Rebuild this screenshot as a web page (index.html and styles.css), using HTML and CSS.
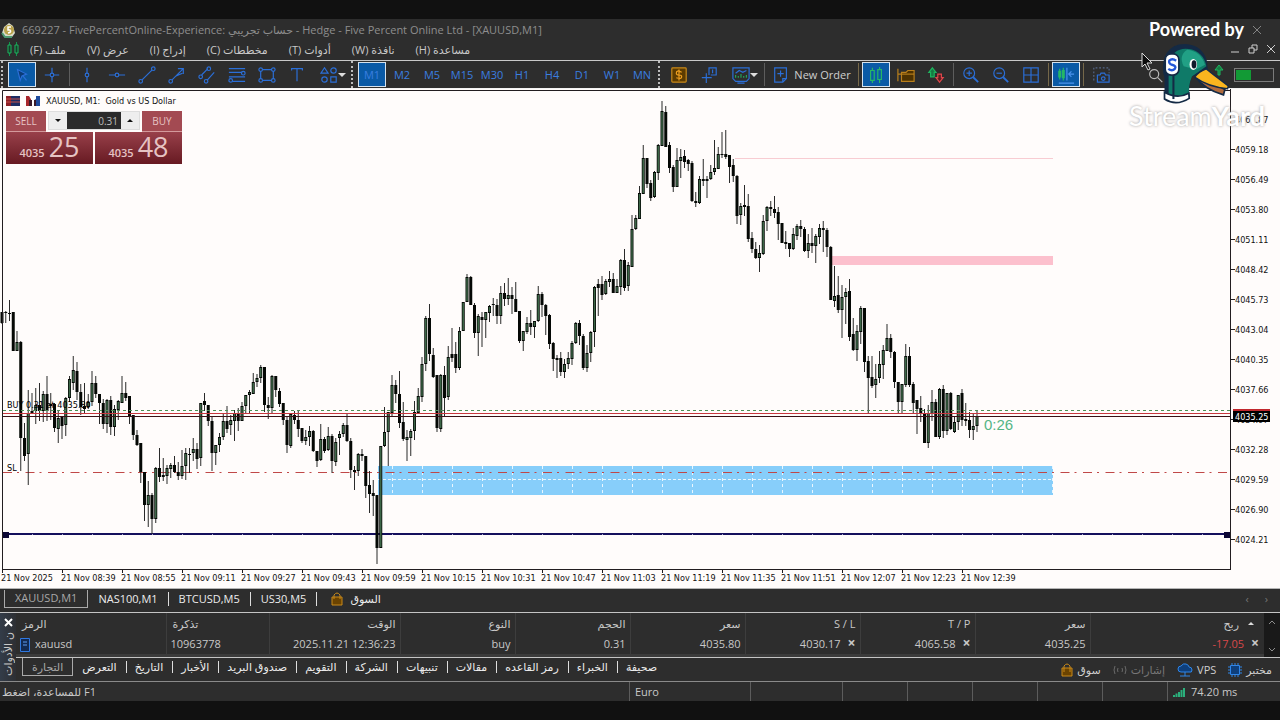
FILE: index.html
```html
<!DOCTYPE html>
<html lang="ar">
<head>
    <meta charset="UTF-8">
    <meta name="viewport" content="width=device-width, initial-scale=1.0">
    <title>XAUUSD,M1</title>
    <link rel="stylesheet" href="styles.css">
</head>
<body>
    <div class="app">
        <!-- Title bar -->
        <header class="titlebar">
            <svg class="logo" width="16" height="16" viewBox="0 0 16 16"><path d="M3 5 8 1l4 3 2 7-3 4H4l-3-4z" fill="#d9dccb"/><circle cx="8" cy="8" r="5" fill="#b9a24a"/><path d="M10 5H7v3h2q2 2-2 3" fill="none" stroke="#fff" stroke-width="1.5"/><path d="M1 11l3 4h7" fill="none" stroke="#4e9a72" stroke-width="2"/></svg>
            <span class="title">669227 - FivePercentOnline-Experience: حساب تجريبي - Hedge - Five Percent Online Ltd - [XAUUSD,M1]</span>
            <button class="win close-app" aria-label="Close"><svg width="10" height="10" viewBox="0 0 10 10"><path d="M1 1l8 8M9 1L1 9"/></svg></button>
        </header>

        <!-- Menu -->
        <nav class="menubar">
            <svg class="candles" width="14" height="16" viewBox="0 0 14 16"><path d="M3.500 1v14M10.500 1v14" stroke="#15944d"/><path d="M2 4h3v8H2zM9 4h3v8H9z" fill="#173f2a" stroke="#1db45e"/></svg>
            <button dir="rtl">ملف (F)</button>
            <button dir="rtl">عرض (V)</button>
            <button dir="rtl">إدراج (I)</button>
            <button dir="rtl">مخططات (C)</button>
            <button dir="rtl">أدوات (T)</button>
            <button dir="rtl">نافذة (W)</button>
            <button dir="rtl">مساعدة (H)</button>
            <div class="win-group">
                <button class="win" aria-label="Minimize"><svg width="10" height="10" viewBox="0 0 10 10"><path d="M1 8h8"/></svg></button>
                <button class="win" aria-label="Restore"><svg width="10" height="10" viewBox="0 0 10 10"><path d="M1 4h5v5H1zM4 4V1h5v5H6"/></svg></button>
                <button class="win" aria-label="Close chart"><svg width="10" height="10" viewBox="0 0 10 10"><path d="M1 1l8 8M9 1L1 9"/></svg></button>
            </div>
        </nav>

        <!-- Toolbar -->
        <div class="toolbar">
            <span class="grip"></span>
            <button class="tool active" aria-label="Cursor"><svg viewBox="0 0 20 20"><path d="M5 4l3 12 2-5 5-2z" fill="#0b3c78"/><path d="M11 11l4 5"/></svg></button>
            <button class="tool" aria-label="Crosshair"><svg viewBox="0 0 20 20"><path d="M10 2v6M10 12v6M2 10h6M12 10h6"/><circle cx="10" cy="10" r="2"/></svg></button>
            <span class="sep"></span>
            <button class="tool" aria-label="Vertical line"><svg viewBox="0 0 20 20"><path d="M10 2v6M10 12v6"/><circle cx="10" cy="10" r="2"/></svg></button>
            <button class="tool" aria-label="Horizontal line"><svg viewBox="0 0 20 20"><path d="M1 10h7M12 10h7"/><circle cx="10" cy="10" r="2"/></svg></button>
            <button class="tool" aria-label="Trend line"><svg viewBox="0 0 20 20"><path d="M4.500 15.500l11-11"/><circle cx="3" cy="17" r="2"/><circle cx="17" cy="3" r="2"/></svg></button>
            <button class="tool" aria-label="Arrow line"><svg viewBox="0 0 20 20"><path d="M4.500 15.500L17 3M11 3h6v6M9 11l7-3"/><circle cx="3" cy="17" r="2"/></svg></button>
            <button class="tool" aria-label="Channel"><svg viewBox="0 0 20 20"><path d="M4 10l7-7M10 16l8-9"/><circle cx="3" cy="12" r="2"/><circle cx="12" cy="3" r="2"/><circle cx="9" cy="17" r="2"/></svg></button>
            <button class="tool" aria-label="Fibonacci"><svg viewBox="0 0 20 20"><path d="M1 3h18M1 7h18M1 12h18M1 17h18"/><circle cx="17" cy="8" r="2" fill="#2d2d2d"/><circle cx="3" cy="16" r="2" fill="#2d2d2d"/></svg></button>
            <button class="tool" aria-label="Rectangle"><svg viewBox="0 0 20 20"><path d="M3 4h14v12H3z"/><g fill="#2d2d2d"><circle cx="3" cy="4" r="2"/><circle cx="17" cy="4" r="2"/><circle cx="3" cy="16" r="2"/><circle cx="17" cy="16" r="2"/></g></svg></button>
            <button class="tool" aria-label="Text"><svg viewBox="0 0 20 20"><path d="M4 5V3h12v2M10 3v14"/></svg></button>
            <button class="tool drop" aria-label="Objects"><svg viewBox="0 0 20 20"><path d="M5 2l4 6H1zM12 12h6v6h-6z"/><circle cx="15" cy="5" r="3"/><circle cx="5" cy="15" r="3"/></svg><i class="caret"></i></button>
            <span class="grip"></span>
            <button class="tool active">M1</button>
            <button class="tool">M2</button>
            <button class="tool">M5</button>
            <button class="tool">M15</button>
            <button class="tool">M30</button>
            <button class="tool">H1</button>
            <button class="tool">H4</button>
            <button class="tool">D1</button>
            <button class="tool">W1</button>
            <button class="tool">MN</button>
            <span class="grip"></span>
            <button class="tool" aria-label="Market"><svg viewBox="0 0 20 20"><rect x="2" y="2" width="16" height="16" rx="1" fill="#5c3b00" stroke="#c98a1a"/><path d="M13 7q-6-3-6 1 0 2 3 2t3 2q0 3-6 1M10 4v12" stroke="#f0a020"/></svg></button>
            <button class="tool" aria-label="Data window"><svg viewBox="0 0 20 20"><path d="M7 8v11M2 13h11M10 10V2h8v8h-6"/><path d="M14 4v4"/></svg></button>
            <button class="tool drop" aria-label="Indicators"><svg viewBox="0 0 20 20"><path d="M1 2h18v12l-3 3H4l-3-3zM6 19h8"/><path d="M4 8l4-3 4 2 4-2" /><path d="M4 13v-3M7 13v-2M10 13v-4M13 13v-2M16 13v-3" stroke="#22a55a"/></svg><i class="caret"></i></button>
            <span class="sep"></span>
            <button class="tool order"><svg viewBox="0 0 20 20"><path d="M3 2h13v12l-4 4H3zM16 14h-4v4M9.500 5v7M6 8.500h7"/></svg>New Order</button>
            <span class="sep amber"></span>
            <button class="tool active" aria-label="Candles"><svg viewBox="0 0 20 20" class="green"><path d="M6 2v3M6 16v3M14 1v3M14 15v4M4 5h4v11H4zM12 4h4v11h-4z"/></svg></button>
            <button class="tool" aria-label="Templates"><svg viewBox="0 0 20 20"><path d="M1 3v14M1 9h4" stroke="#b97f1b"/><path d="M5 7h5l2-2h7v12H5z" fill="#4e3200" stroke="#b97f1b"/><path d="M5 9h14" stroke="#b97f1b"/></svg></button>
            <button class="tool" aria-label="Depth"><svg viewBox="0 0 20 20"><path d="M6 2l4 5H8v5H4V7H2z" fill="#157a42" stroke="#1db45e"/><path d="M14 18l4-5h-2V9h-4v4h-2z" fill="#5b1d20" stroke="#e0474c"/></svg></button>
            <span class="sep"></span>
            <button class="tool" aria-label="Zoom in"><svg viewBox="0 0 20 20"><circle cx="8" cy="8" r="6"/><path d="M12.500 12.500L18 18" stroke-width="2"/><path d="M8 5v6M5 8h6"/></svg></button>
            <button class="tool" aria-label="Zoom out"><svg viewBox="0 0 20 20"><circle cx="8" cy="8" r="6"/><path d="M12.500 12.500L18 18" stroke-width="2"/><path d="M5 8h6"/></svg></button>
            <button class="tool" aria-label="Tile windows"><svg viewBox="0 0 20 20"><path d="M2 2h16v16H2zM10 2v16M2 10h16"/></svg></button>
            <span class="sep amber"></span>
            <button class="tool active" aria-label="Chart shift"><svg viewBox="0 0 20 20"><path d="M3 3v12M7 2v14M2 6h2v6H2zM6 5h2v8H6z" stroke="#25b866"/><path d="M11 2v14M19 9h-5M16 6l-3 3 3 3M2 19h17" stroke="#4b94ee"/></svg></button>
            <span class="sep amber"></span>
            <button class="tool" aria-label="Screenshot"><svg viewBox="0 0 20 20"><path d="M2 16V2h17v6" stroke="#56688a" stroke-dasharray="2 2"/><path d="M6 10h3l1-2h4l1 2h4v8H6z"/><circle cx="12.500" cy="14" r="2"/></svg></button>
            <div class="tool-right">
                <button class="tool" aria-label="Search"><svg viewBox="0 0 20 20" class="grey"><circle cx="8" cy="9" r="5"/><path d="M12 13l5 5"/></svg></button>
                <svg class="up" width="10" height="16" viewBox="0 0 10 16"><path d="M5 1l4 5H6v5H4V6H1z" fill="#157a42" stroke="#1db45e"/></svg>
                <span class="battery"><i></i></span>
            </div>
        </div>

        <!-- Chart -->
        <main class="chart">
            <svg class="plot" id="plot" width="100%" height="484">
                <g transform="translate(0 -89)">
                    <rect x="735" y="158" width="318" height="1" fill="#f8ccd2"/>
                    <rect x="832" y="256" width="221" height="9" fill="#fcc0cd"/>
                    <rect x="378" y="466" width="675" height="29" fill="#87cefa"/>
                    <path d="M378 479.500h675" stroke="#e9f6fe" stroke-dasharray="3 2"/>
                    <g id="grid" stroke="#e9f6fe" stroke-dasharray="3 3"></g>
                    <line x1="3" x2="99.800%" y1="472.500" y2="472.500" stroke="#c04848" stroke-dasharray="9 5 2 6.500"/>
                    <rect x="3" y="533" width="100%" height="2" fill="#140f5c"/>
                    <g id="marks" fill="#aaa6cd"></g>
                    <g id="candles"></g>
                    <line x1="3" x2="100%" y1="410.500" y2="410.500" stroke="#4f8f55" stroke-dasharray="3 3"/>
                    <line x1="3" x2="100%" y1="413.500" y2="413.500" stroke="#c8383e"/>
                    <line x1="3" x2="100%" y1="416.500" y2="416.500" stroke="#3a1014"/>
                    <path d="M2.500 570V90.500H4000" fill="none" stroke="#221d20"/>
                    <path d="M2 569.500H4000" stroke="#221d20"/>
                    <rect x="3" y="532" width="6" height="6" fill="#0b0634"/>
                    <g id="ticks" fill="#221d20"></g>
                    <g class="chart-text">
                        <text x="7" y="408">BUY 0.31 at 4035.80</text>
                        <text x="7" y="471">SL</text>
                    </g>
                    <text class="timer" x="984" y="430">0:26</text>
                </g>
            </svg>
            <div class="prices">
                <span>4061.87</span><span>4059.18</span><span>4056.49</span><span>4053.80</span><span>4051.11</span>
                <span>4048.42</span><span>4045.73</span><span>4043.04</span><span>4040.35</span><span>4037.66</span>
                <span>4034.97</span><span>4032.28</span><span>4029.59</span><span>4026.90</span><span>4024.21</span>
                <b class="tag">4035.25</b>
                <i class="handle"></i>
            </div>
            <div class="times">
                <span>21 Nov 2025</span><span>21 Nov 08:39</span><span>21 Nov 08:55</span><span>21 Nov 09:11</span><span>21 Nov 09:27</span>
                <span>21 Nov 09:43</span><span>21 Nov 09:59</span><span>21 Nov 10:15</span><span>21 Nov 10:31</span><span>21 Nov 10:47</span>
                <span>21 Nov 11:03</span><span>21 Nov 11:19</span><span>21 Nov 11:35</span><span>21 Nov 11:51</span><span>21 Nov 12:07</span>
                <span>21 Nov 12:23</span><span>21 Nov 12:39</span>
            </div>

            <!-- One click trading -->
            <div class="quick">
                <div class="symbol">
                    <svg width="14" height="10" viewBox="0 0 14 10"><path d="M0 0h14v10H0z" fill="#1e2c63"/><path d="M0 0h5v10H0z" fill="#8c1f26"/><path d="M0 3h14M0 6h14" stroke="#c4504b"/></svg>
                    <svg width="14" height="10" viewBox="0 0 14 10"><path d="M0 0h5v10H0z" fill="#a8262c"/><path d="M8 0h6v10H8z" fill="#1f4a9c"/><path d="M3 0h7v3L7 5v5H6V5z" fill="#fff"/><path d="M3 4h3v6H3zM8 4h2v6H8z" fill="#3a1a2a"/></svg>
                    <span>XAUUSD, M1:&nbsp; Gold vs US Dollar</span>
                </div>
                <div class="trade">
                    <button class="side">SELL</button>
                    <div class="lot">
                        <button aria-label="Less"><i class="caret"></i></button>
                        <input type="text" value="0.31" aria-label="Volume">
                        <button aria-label="More"><i class="caret upward"></i></button>
                    </div>
                    <button class="side">BUY</button>
                    <button class="quote"><small>4035</small>25</button>
                    <button class="quote"><small>4035</small>48</button>
                </div>
            </div>
        </main>

        <!-- Chart tabs -->
        <nav class="chart-tabs">
            <button class="current">XAUUSD,M1</button>
            <button>NAS100,M1</button>
            <button>BTCUSD,M5</button>
            <button>US30,M5</button>
            <button class="market"><svg width="12" height="14" viewBox="0 0 12 14"><path d="M1 5h10v8H1z" fill="#6b4300" stroke="#c98a1a"/><path d="M3 7V3q3-4 6 0v4" fill="none" stroke="#c98a1a"/></svg>السوق</button>
            <span class="scroll-tabs">‹<b></b>›</span>
        </nav>

        <!-- Toolbox -->
        <section class="toolbox">
            <aside class="strip">
                <button aria-label="Close toolbox"><svg width="9" height="9" viewBox="0 0 9 9"><path d="M1 1l7 7M8 1L1 8" stroke="#fff" stroke-width="2"/></svg></button>
                <span>ن الأدوات</span>
            </aside>
            <div class="panel">
                <div class="positions">
                    <table>
                        <colgroup><col class="c-symbol"><col class="c-ticket"><col class="c-time"><col class="c-num"><col class="c-num"><col class="c-num"><col class="c-num"><col class="c-num"><col class="c-num"><col></colgroup>
                        <tr><th class="left">الرمز</th><th class="left">تذكرة</th><th>الوقت</th><th>النوع</th><th>الحجم</th><th>سعر</th><th>S / L</th><th>T / P</th><th>سعر</th><th class="profit">ربح<i class="caret upward"></i></th></tr>
                        <tr><td class="left"><svg width="10" height="14" viewBox="0 0 10 14"><path d="M.500.500h9v13h-9z" fill="#122a52" stroke="#2f78e0"/><path d="M3 4h4M3 7h4" stroke="#5d9df5"/></svg>xauusd</td><td class="left">10963778</td><td>2025.11.21 12:36:23</td><td>buy</td><td>0.31</td><td>4035.80</td><td>4030.17<button class="x" aria-label="Remove S/L">×</button></td><td>4065.58<button class="x" aria-label="Remove T/P">×</button></td><td>4035.25</td><td class="profit"><span class="loss">-17.05</span><button class="x" aria-label="Close position">×</button></td></tr>
                    </table>
                    <div class="vscroll"><svg width="8" height="5" viewBox="0 0 8 5"><path d="M1 4l3-3 3 3"/></svg><svg width="8" height="5" viewBox="0 0 8 5"><path d="M1 1l3 3 3-3"/></svg></div>
                </div>
                <nav class="box-tabs">
                    <button class="current">التجارة</button>
                    <button>التعرض</button>
                    <button>التاريخ</button>
                    <button>الأخبار</button>
                    <button>صندوق البريد</button>
                    <button>التقويم</button>
                    <button>الشركة</button>
                    <button>تنبيهات</button>
                    <button>مقالات</button>
                    <button>رمز القاعده</button>
                    <button>الخبراء</button>
                    <button>صحيفة</button>
                    <div class="services">
                        <a href="#"><svg width="12" height="14" viewBox="0 0 12 14"><path d="M1 5h10v8H1z" fill="#6b4300" stroke="#c98a1a"/><path d="M3 9V3q3-4 6 0v6" fill="none" stroke="#c98a1a"/></svg>سوق</a>
                        <a href="#" class="dim"><svg width="14" height="10" viewBox="0 0 14 10" fill="none" stroke="#6a6a6a"><path d="M2 1q-2 4 0 8M5 3q-1 2 0 4M12 1q2 4 0 8M9 3q1 2 0 4"/></svg>إشارات</a>
                        <a href="#"><svg width="16" height="14" viewBox="0 0 16 14"><path d="M4 9q-3 0-3-3t3-3q2-3 5-2t3 3q3 0 3 3t-3 2z" fill="#0e3f7c" stroke="#2f86e8"/><path d="M8 9v4M3 13h10" stroke="#2f86e8"/></svg>VPS</a>
                        <a href="#"><svg width="14" height="14" viewBox="0 0 14 14"><path d="M4 0v14M7 0v14M10 0v14M0 4h14M0 7h14M0 10h14" stroke="#2f86e8"/><path d="M2.500 2.500h9v9h-9z" fill="#0e3f7c" stroke="#2f86e8"/></svg>مختبر</a>
                    </div>
                </nav>
            </div>
        </section>

        <!-- Status bar -->
        <footer class="status">
            <span class="help">للمساعدة، اضغط F1</span>
            <span class="w120">Euro</span><span class="w92"></span><span></span><span></span><span></span><span></span><span></span>
            <span class="ping"><svg width="13" height="10" viewBox="0 0 13 10"><path d="M1 10V8M3.500 10V6.500M6 10V5M8.500 10V3M11 10V1" stroke="#2bb07c" stroke-width="2"/></svg>74.20 ms</span>
        </footer>

        <!-- Stream watermark -->
        <div class="powered">Powered by</div>
        <svg class="duck" width="72" height="64" viewBox="1215 75 210 186">
            <path d="M1234 182q-12-38 6-72 20-30 62-26 44 6 56 50l2 24-48 22q-10 30-4 58-30 24-74 2z" fill="#142a45"/>
            <path d="M1246 240V170l18-62q18-14 42-10 42 8 50 50l-42 30q-12 26-8 58-30 18-60 4z" fill="#0f7a68"/>
            <path d="M1300 100q40 4 52 44l-26 14-36-10q-16-30 10-48z" fill="#21a085"/>
            <path d="M1234 224v20q34 22 72-2l-1-15q-34 18-71-3z" fill="#fff" stroke="#142a45" stroke-width="5"/>
            <path d="M1260 172v72" stroke="#142a45" stroke-width="6"/>
            <path d="M1324 178q24 36 82 54l4-16-56-30z" fill="#b06a3c" stroke="#142a45" stroke-width="5"/>
            <path d="M1322 180q12-16 34-24l20 16 44 34-2 8q-58-6-96-34z" fill="#f9b51e" stroke="#142a45" stroke-width="4"/>
            <ellipse cx="1318" cy="143" rx="11" ry="16" fill="#fff"/><ellipse cx="1320" cy="143" rx="7" ry="12" fill="#10192b"/>
            <rect x="1236" y="112" width="40" height="62" rx="17" fill="#fff" stroke="#142a45" stroke-width="5"/>
            <path d="M1268 132q-12-8-20 0-3 8 8 12 14 4 8 12-8 8-19 0" fill="none" stroke="#2458d8" stroke-width="7"/>
        </svg>
        <div class="brand">Stream<b>Yard</b></div>
        <svg class="pointer" width="12" height="19" viewBox="0 0 12 19"><path d="M1 1v14l3-3 3 6 2-1-3-6h5z" fill="#0c0c0c" stroke="#ddd"/></svg>
    </div>
    <script src="script.js"></script>
</body>
</html>
```
FILE: styles.css
```css
* {
    box-sizing: border-box;
}
body {
    margin: 0;
    background-color: #111;
    color: #c8c8c8;
    font-family: "Open Sans", "DejaVu Sans", sans-serif;
    font-size: 11px;
}
button, input {
    font: inherit;
    color: inherit;
    background: none;
    border: none;
    padding: 0;
    margin: 0;
}
.app {
    position: relative;
    margin: 19px 0;
    background-color: #2d2d2d;
    overflow: hidden;
}
.app svg {
    flex: none;
}

/* Title and menu */
.titlebar {
    display: flex;
    align-items: center;
    height: 21px;
    padding: 0 18px 0 1px;
    color: #8e8e8e;
}
.title {
    margin-left: 5px;
    white-space: nowrap;
}
.win {
    display: flex;
    align-items: center;
}
.win svg {
    fill: none;
    stroke: #d0d0d0;
}
.close-app {
    margin-left: auto;
}
.close-app svg {
    stroke: #858585;
}
.menubar {
    display: flex;
    align-items: center;
    gap: 21px;
    height: 20px;
    padding: 0 4px 2px 6px;
    white-space: nowrap;
}
.candles {
    margin-right: -11px;
}
.win-group {
    display: flex;
    gap: 8px;
    margin-left: auto;
}

/* Toolbar */
.toolbar {
    display: flex;
    align-items: center;
    gap: 2px;
    height: 29px;
    padding: 0 6px 0 1px;
    border-top: 1px solid #c9c9c9;
    border-bottom: 1px solid #f2f2f2;
}
.tool {
    display: flex;
    align-items: center;
    justify-content: center;
    flex: none;
    width: 28px;
    height: 25px;
    color: #3a7ee0;
}
.tool svg {
    width: 18px;
    height: 18px;
    fill: none;
    stroke: #2b6fd8;
    stroke-width: 1.3;
}
.tool svg.green {
    stroke: #25b866;
}
.tool svg.grey {
    stroke: #bbb;
}
.tool.active {
    background-color: #0a5aa6;
    border: 1px solid #d5e2ee;
}
.tool.drop {
    width: 36px;
    padding-left: 4px;
}
.tool.order {
    width: 87px;
    gap: 4px;
    color: #cfcfcf;
}
.caret {
    display: inline-block;
    flex: none;
    border: 4px solid transparent;
    border-top-color: #ddd;
    border-bottom: none;
}
.caret.upward {
    border-top: none;
    border-bottom: 4px solid #ddd;
}
.grip {
    flex: none;
    width: 3px;
    height: 27px;
    margin-right: 2px;
    border-left: 2px dotted #bdbdbd;
}
.sep {
    flex: none;
    width: 1px;
    height: 23px;
    margin: 0 1px;
    background-color: #5d5d5d;
}
.sep.amber {
    background-color: #75684a;
}
.tool-right {
    display: flex;
    align-items: center;
    margin-left: auto;
}
.up {
    margin: 0 10px 6px 44px;
}
.battery {
    width: 40px;
    height: 14px;
    padding: 1px;
    border: 1px solid #7b7b7b;
}
.battery i {
    display: block;
    width: 15px;
    height: 10px;
    background-color: #129a35;
}

/* Chart */
.chart {
    position: relative;
    display: grid;
    grid-template-columns: 1fr 50px;
    background-color: #fffcfb;
    color: #111;
    font-family: "DejaVu Sans Condensed", "DejaVu Sans", sans-serif;
    font-size: 9px;
    border-bottom: 1px solid #b5b5b5;
}
.plot {
    display: block;
}
.chart-text {
    font-size: 9px;
}
.timer {
    font-family: "Liberation Sans", sans-serif;
    font-size: 15px;
    fill: #54b585;
}
.prices {
    position: relative;
    display: flex;
    flex-direction: column;
    height: 481px;
    padding-top: 16px;
    border-left: 1px solid #221d20;
}
.prices span {
    height: 30px;
    line-height: 30px;
}
.prices span::before {
    content: "";
    display: inline-block;
    width: 4px;
    height: 1px;
    margin-bottom: 3px;
    background-color: #221d20;
}
.tag {
    position: absolute;
    left: 2px;
    top: 320px;
    padding: 0 2px;
    height: 13px;
    line-height: 12px;
    border-top: 2px solid #c1272d;
    background-color: #000;
    color: #fff;
    font-weight: normal;
}
.handle {
    position: absolute;
    left: -7px;
    top: 443px;
    width: 6px;
    height: 6px;
    background-color: #0b0634;
}
.times {
    grid-column: 1 / 3;
    display: flex;
    height: 15px;
    padding-left: 1px;
    line-height: 10px;
    white-space: nowrap;
    overflow: hidden;
}
.times span {
    flex: none;
    width: 60px;
}

/* One click trading */
.quick {
    position: absolute;
    left: 6px;
    top: 6px;
}
.symbol {
    display: flex;
    align-items: center;
    gap: 6px;
    height: 12px;
    margin-bottom: 4px;
    white-space: nowrap;
}
.trade {
    display: flex;
    flex-wrap: wrap;
    gap: 0 2px;
    width: 176px;
    font-family: "Open Sans", sans-serif;
    font-size: 10px;
    color: #e6c3c3;
}
.side {
    width: 40px;
    height: 21px;
    background-color: #a34a52;
    border-bottom: 1px solid #d39a9c;
}
.lot {
    display: flex;
    flex: 1;
    height: 19px;
    border: 1px solid #ddd;
}
.lot button {
    display: flex;
    align-items: center;
    justify-content: center;
    width: 18px;
    background-color: #eee;
}
.lot .caret {
    border-width: 3px;
    border-top-color: #111;
    border-bottom-width: 0;
}
.lot .caret.upward {
    border-top-width: 0;
    border-bottom: 3px solid #111;
}
.lot input {
    flex: 1;
    width: 0;
    padding-right: 3px;
    background-color: #2b2b2b;
    color: #bdbdbd;
    text-align: right;
}
.quote {
    display: flex;
    align-items: flex-end;
    justify-content: center;
    gap: 4px;
    width: 87px;
    height: 32px;
    padding-bottom: 3px;
    background-image: linear-gradient(#98404a, #671a22);
    font-size: 27px;
    line-height: 28px;
}
.quote small {
    font-size: 11px;
    line-height: 16px;
    font-weight: 600;
}

/* Chart tabs */
.chart-tabs {
    display: flex;
    align-items: center;
    height: 24px;
    padding: 0 12px 4px 4px;
    border-bottom: 1px solid #c4c4c4;
    color: #ececec;
}
.chart-tabs button {
    height: 14px;
    line-height: 14px;
    padding: 0 10px;
    border-right: 1px solid #ddd;
}
.chart-tabs .current {
    height: 18px;
    border: 1px solid #aaa;
    border-top: none;
    color: #a8a8a8;
}
.chart-tabs .market {
    display: flex;
    align-items: center;
    gap: 7px;
    padding-left: 14px;
    border: none;
}
.scroll-tabs {
    display: flex;
    gap: 8px;
    margin-left: auto;
    color: #777;
}

/* Toolbox */
.toolbox {
    display: flex;
}
.strip {
    display: flex;
    flex-direction: column;
    align-items: center;
    gap: 4px;
    width: 16px;
    padding-top: 5px;
    background-image: linear-gradient(90deg, #333c49, #2d2f33);
    border-bottom: 1px solid #8a8a8a;
    overflow: hidden;
}
.strip button {
    line-height: 10px;
}
.strip span {
    writing-mode: vertical-rl;
    transform: rotate(180deg);
    line-height: 14px;
    white-space: nowrap;
}
.panel {
    flex: 1;
    min-width: 0;
}
.positions {
    display: flex;
    border-bottom: 1px solid #c4c4c4;
}
.positions table {
    flex: 1;
    table-layout: fixed;
    width: 100%;
    border-collapse: collapse;
    border-bottom: 3px solid #3b3b3b;
}
.c-symbol { width: 150px; }
.c-ticket { width: 103px; }
.c-time { width: 131px; }
.c-num { width: 115px; }
th, td {
    height: 21px;
    padding: 0 4px 0 6px;
    border-right: 1px solid #3d3d3d;
    text-align: right;
    font-weight: normal;
    line-height: 20px;
    white-space: nowrap;
}
td:last-child, th:last-child {
    border-right: none;
}
.positions .left {
    text-align: left;
}
td.left {
    padding-left: 4px;
}
.left svg {
    margin: 0 5px 0 0;
    vertical-align: middle;
}
td.profit {
    padding-right: 5px;
}
th.profit {
    padding-right: 10px;
}
th .caret, th .caret.upward {
    margin: 0 0 3px 9px;
    border-width: 3px;
    border-top-width: 0;
}
.loss {
    color: #d8484a;
}
.x {
    width: 8px;
    margin-left: 7px;
    font-size: 14px;
    font-weight: 700;
    line-height: 14px;
}
.vscroll {
    display: flex;
    flex-direction: column;
    align-items: center;
    justify-content: space-between;
    width: 16px;
    padding: 7px 0 5px;
    background-color: #191919;
}
.vscroll svg {
    fill: none;
    stroke: #8d8d8d;
}
.box-tabs {
    display: flex;
    align-items: flex-start;
    height: 24px;
    padding: 0 8px 0 6px;
    border-bottom: 1px solid #8a8a8a;
    color: #ececec;
    white-space: nowrap;
}
.box-tabs button {
    position: relative;
    height: 18px;
    line-height: 16px;
    padding: 0 9px;
}
.box-tabs button + button + button::before {
    content: "";
    position: absolute;
    left: 0;
    top: 3px;
    height: 12px;
    border-left: 1px solid #ddd;
}
.box-tabs .current {
    border: 1px solid #aaa;
    border-top: none;
    color: #a8a8a8;
}
.services {
    display: flex;
    gap: 12px;
    height: 23px;
    margin-left: auto;
}
.services a {
    display: flex;
    align-items: center;
    gap: 4px;
    color: #cfcfcf;
    text-decoration: none;
}
.services .dim {
    color: #777;
}

/* Status bar */
.status {
    display: flex;
    height: 19px;
    line-height: 19px;
    white-space: nowrap;
}
.status span {
    width: 65px;
    padding-left: 5px;
    border-left: 1px solid #5c5c5c;
}
.status .help {
    flex: 1;
    padding-left: 2px;
    border: none;
}
.status .w120 { width: 121px; }
.status .w92 { width: 92px; }
.status .ping {
    display: flex;
    align-items: center;
    gap: 5px;
    width: 113px;
}

/* Stream watermark */
.powered, .brand, .duck, .pointer {
    position: absolute;
}
.powered {
    right: 36px;
    top: 0;
    color: #fff;
    font-family: Lato, sans-serif;
    font-size: 18px;
    font-weight: 700;
    line-height: 20px;
}
.duck {
    right: 50px;
    top: 22px;
}
.brand {
    right: 15px;
    top: 80px;
    color: #fff;
    font-family: Lato, sans-serif;
    font-size: 27px;
    text-shadow: 0 0 3px #999;
}
.pointer {
    right: 127px;
    top: 33px;
}
```
FILE: script.js
```js
// One bar per row: high, body top, body bottom, low, 1 = rising
const bars = `312,312,323,324,0 311,312,313,323,0 300,313,314,321,0 312,312,351,351,0 331,342,351,351,1 341,342,438,471,0 423,438,456,461,0 390,413,454,485,1
393,411,414,414,0 388,405,411,424,1 383,405,411,421,0 391,394,411,422,1 376,394,411,421,0 393,404,406,420,0 403,404,428,432,0 410,418,429,443,1
416,417,426,439,0 397,398,425,436,1 376,379,398,402,1 356,370,383,390,1 362,371,392,400,0 384,392,407,415,0 383,406,409,414,0 394,402,407,409,1
371,383,402,406,1 376,383,394,398,0 394,394,403,424,0 399,403,424,429,0 399,400,424,433,1 396,400,427,435,0 405,409,427,436,1 400,401,410,420,1
376,393,403,403,1 382,393,398,401,0 396,396,416,424,0 415,415,435,440,0 430,435,445,446,0 443,443,472,483,0 472,472,505,521,0 481,495,505,527,1
493,495,519,534,0 467,468,519,523,1 448,468,477,482,0 458,475,477,481,0 465,468,476,484,1 463,465,469,478,1 456,465,472,473,0 462,472,476,480,0
450,466,476,479,1 448,453,466,480,1 448,454,455,473,0 438,449,453,461,1 443,449,459,469,0 403,403,458,466,1 393,401,405,411,0 405,405,421,426,0
416,421,453,471,0 445,445,453,465,1 433,437,445,452,1 413,421,437,440,1 406,421,429,433,0 415,420,425,435,1 410,413,421,441,1 408,413,421,431,0
402,406,421,421,1 395,395,406,413,1 390,392,395,414,1 373,382,394,394,1 374,378,382,387,1 365,367,378,383,1 367,367,405,412,0 397,405,408,419,0
375,376,408,413,1 376,376,390,397,0 388,391,404,407,0 403,403,420,425,0 417,420,445,453,0 413,414,446,448,1 411,415,420,424,0 411,420,429,437,0
428,428,441,443,0 430,437,441,445,1 426,431,437,446,1 430,431,451,452,0 451,451,461,467,0 424,439,460,461,1 437,439,451,453,0 427,436,450,451,1
434,436,461,473,0 438,442,462,466,1 431,434,438,455,1 423,425,434,437,1 414,425,441,442,0 438,441,470,478,0 466,470,472,490,0 453,454,471,476,1
449,454,456,461,0 456,456,486,498,0 471,485,494,513,0 480,493,496,516,0 495,495,548,564,0 446,446,548,548,1 407,432,446,447,1 412,412,432,466,1
375,385,413,416,1 380,385,394,403,0 371,394,423,428,0 402,422,439,441,0 430,437,440,461,1 429,431,438,456,1 401,412,431,440,1 388,396,413,413,1
357,364,397,402,1 316,318,364,371,1 304,318,354,361,0 348,355,377,378,0 375,375,428,432,0 374,375,429,432,1 366,375,398,416,0 346,357,397,400,1
328,354,358,362,0 342,354,368,373,0 327,331,368,370,1 302,302,331,331,1 274,277,302,302,1 276,277,305,305,0 303,305,333,338,0 314,316,333,356,1
312,317,320,347,0 312,312,320,338,1 305,306,313,322,1 298,304,305,316,0 299,305,316,324,0 286,293,316,324,1 283,293,299,306,0 278,295,299,305,1
287,295,299,314,0 282,299,312,312,0 311,311,341,343,0 331,331,341,351,1 317,323,332,334,1 310,323,327,335,0 321,321,327,338,1 286,294,321,322,1
292,294,305,317,0 304,305,316,335,0 314,315,344,349,0 342,343,359,371,0 355,358,360,378,0 352,358,372,376,0 359,364,372,378,1 352,358,364,369,1
341,343,359,365,1 322,323,343,344,1 320,323,336,345,0 334,336,368,370,0 345,353,368,372,1 331,332,353,362,1 286,287,332,347,1 279,284,288,316,0
276,284,295,300,0 279,281,294,295,1 271,279,282,287,1 273,279,293,293,0 279,286,293,293,1 259,260,287,295,1 249,260,288,291,0 262,265,286,291,1
215,229,267,267,1 215,218,229,230,1 186,193,219,219,1 145,158,194,194,1 158,158,184,188,0 180,183,198,201,0 171,172,197,198,1 144,145,173,180,1
101,111,146,146,1 106,112,147,147,0 142,145,168,173,0 165,167,187,192,0 148,160,187,187,1 149,157,161,178,1 150,156,162,168,0 159,160,164,171,0
161,163,201,202,0 192,201,203,207,0 176,179,203,204,1 159,179,181,186,0 176,179,181,198,0 165,172,179,180,1 140,168,172,175,1 147,154,169,169,1
132,154,155,158,0 130,154,157,159,0 155,155,167,183,0 159,165,176,182,0 175,176,216,224,0 203,206,215,225,1 185,205,207,216,0 194,206,239,242,0
232,238,249,253,0 242,249,258,259,0 245,253,258,272,1 215,221,254,255,1 206,207,221,231,1 201,207,209,216,0 196,209,213,218,0 207,212,224,240,0
223,223,243,243,0 231,242,244,249,0 243,243,249,257,0 228,234,249,250,1 224,226,236,240,1 220,226,229,237,0 227,229,251,252,0 234,243,251,258,1
228,243,246,253,0 234,236,246,263,1 224,228,237,244,1 221,228,230,252,0 228,230,247,257,0 246,247,300,300,0 266,296,301,307,1 276,295,310,313,0
285,297,310,338,1 288,292,297,324,1 279,291,337,341,0 318,334,350,351,0 325,331,350,361,1 306,308,332,344,1 308,308,362,372,0 356,361,378,413,0
356,377,386,388,0 364,379,385,398,1 351,364,378,383,1 345,350,365,379,1 324,338,351,351,1 334,338,352,358,0 351,352,382,388,0 382,382,402,414,0
384,384,402,413,1 344,356,385,387,1 347,356,385,387,0 382,384,403,413,0 400,400,409,434,0 396,408,414,422,0 409,414,443,443,0 405,413,443,448,1
390,402,414,421,1 399,402,437,437,0 388,389,437,439,1 385,389,431,438,0 393,393,431,435,1 392,393,429,430,0 416,422,432,433,1 395,395,422,430,1
389,393,420,426,0 403,419,421,426,0 412,420,430,438,0 414,426,430,440,1 411,416,426,432,1`;

const NS = "http://www.w3.org/2000/svg";

function addRect(parent, x, y, width, height, fill) {
    const rect = document.createElementNS(NS, "rect");
    rect.setAttribute("x", x);
    rect.setAttribute("y", y);
    rect.setAttribute("width", width);
    rect.setAttribute("height", height);
    if (fill) rect.setAttribute("fill", fill);
    parent.appendChild(rect);
}

const candles = document.getElementById("candles");
bars.split(/\s+/).forEach((row, i) => {
    const [high, top, bottom, low, rising] = row.split(",").map(Number);
    const x = 2 + i * 3.75;
    addRect(candles, x - 0.5, high, 1, low - high, "#2a2a2a");
    addRect(candles, x - 1.5, top, 3, Math.max(bottom - top, 1), "#050805");
    if (rising && bottom - top > 2) {
        addRect(candles, x - 0.75, top + 1, 1.5, bottom - top - 2, "#3c6647");
    }
});

// time ticks
for (let x = 2; x < 1000; x += 60) {
    addRect(document.getElementById("ticks"), x, 570, 1, 3);
}

// grid that shows through the zone and the level
for (let x = 392; x < 1053; x += 30) {
    const line = document.createElementNS(NS, "line");
    line.setAttribute("x1", x + 0.5);
    line.setAttribute("x2", x + 0.5);
    line.setAttribute("y1", 466);
    line.setAttribute("y2", 495);
    document.getElementById("grid").appendChild(line);
}
for (let x = 32; x < 1220; x += 30) {
    addRect(document.getElementById("marks"), x, 534, 1, 1);
}
```
